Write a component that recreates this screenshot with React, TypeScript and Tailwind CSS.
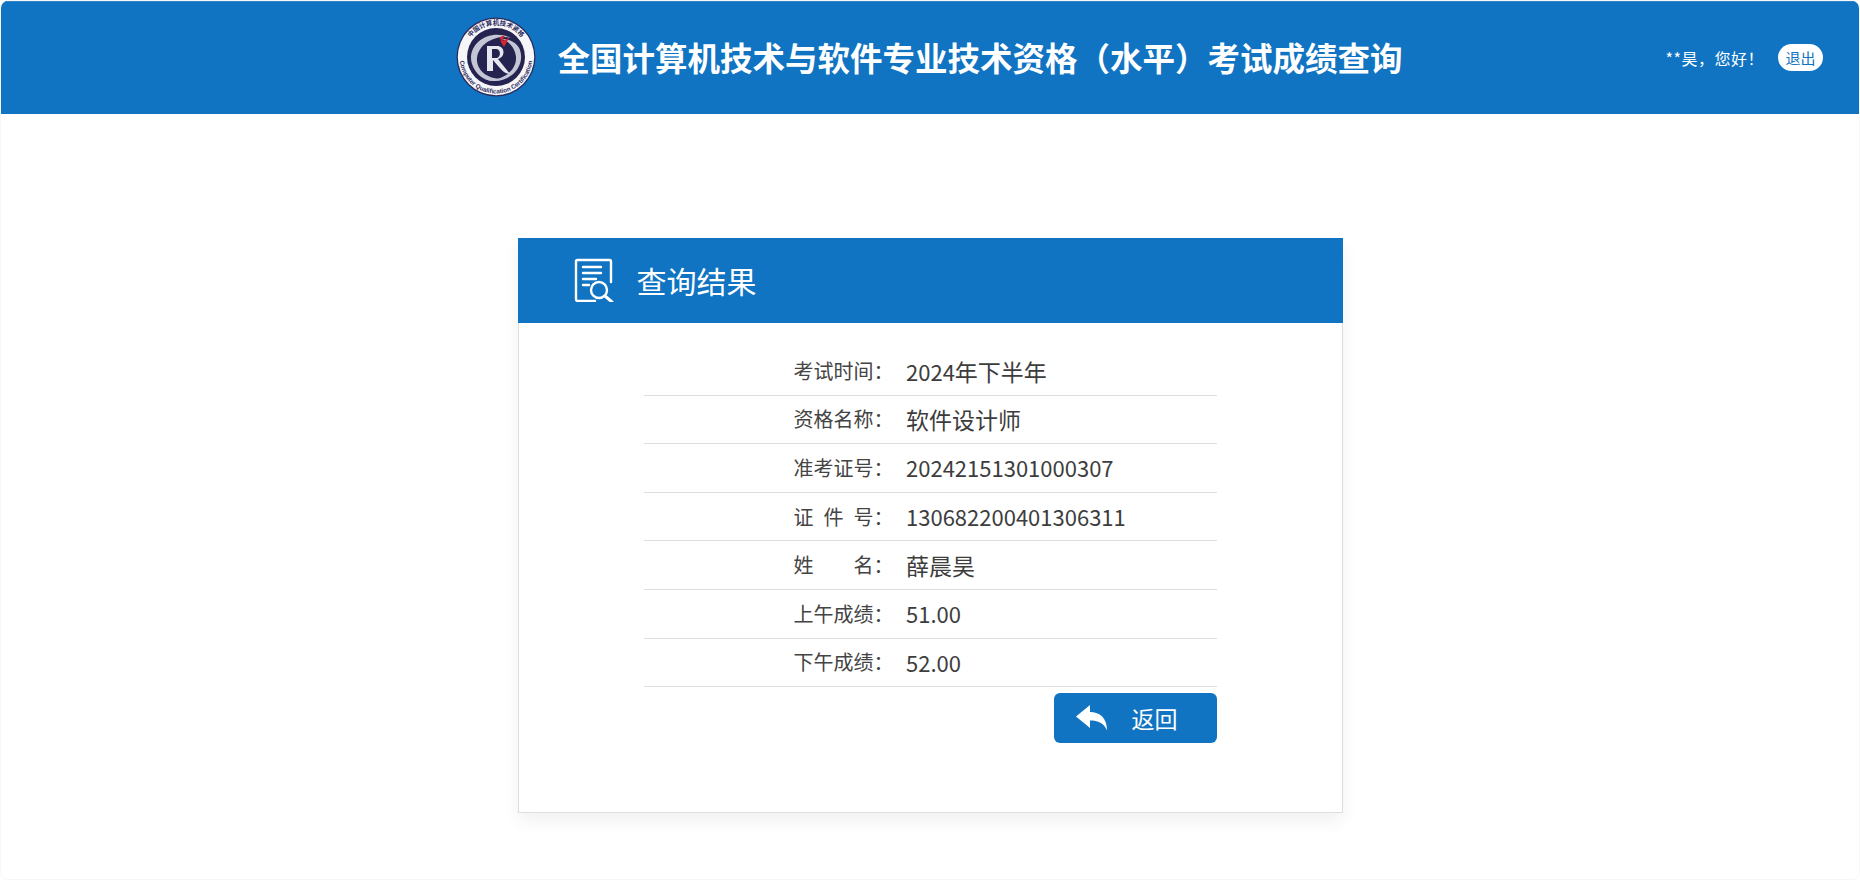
import type { ReactNode } from "react";

const cjk = (text: string) => <span className="text-[23px]">{text}</span>;

const rows: { label: string; value: ReactNode }[] = [
  { label: "考试时间", value: <>2024{cjk("年下半年")}</> },
  { label: "资格名称", value: cjk("软件设计师") },
  { label: "准考证号", value: "20242151301000307" },
  { label: "证\u2002件\u2002号", value: "130682200401306311" },
  { label: "姓　　名", value: cjk("薛晨昊") },
  { label: "上午成绩", value: "51.00" },
  { label: "下午成绩", value: "52.00" },
];

function Logo() {
  return (
    <svg width="80" height="80" viewBox="0 0 80 80" className="shrink-0">
      <circle cx="40" cy="40" r="39.5" fill="#2a2a5c" />
      <circle cx="40" cy="40" r="38.2" fill="#f6f6f9" />
      <circle cx="40" cy="40" r="29" fill="#25234f" />
      {/* swirl */}
      <path d="M16 47C10 28 32 10 56 21C42 17 23 25 21 41C20 52 30 62 46 62C34 68 20 60 16 47Z" fill="#c4c6d6" />
      <path d="M64 33C70 50 52 70 28 62C44 65 61 55 60 40C59 30 52 24 46 22C55 22 62 27 64 33Z" fill="#c4c6d6" />
      {/* R mark */}
      <path d="M31 29H41C49 29 50 40 42 42L54 57C49 57 46 54 37 43V54H31V30Z" fill="#e6e7ef" />
      <path d="M36 32V41H41C45 40 45 32 40 32Z" fill="#25234f" />
      <path d="M44 20L49 18L46 24L53 21L48 30L45 25Z" fill="#d8242c" />
      <defs>
        <path id="logoTop" d="M8 40A32 32 0 0 1 72 40" />
        <path id="logoBottom" d="M3.5 40A36.5 36.5 0 0 0 76.5 40" />
      </defs>
      <text fontSize="6.5" fontWeight="700" fill="#2a2a5c" fontFamily="'Noto Sans CJK SC', sans-serif">
        <textPath href="#logoTop" startOffset="50%" textAnchor="middle">中国计算机技术资格</textPath>
      </text>
      <text fontSize="6.2" fontWeight="700" fill="#2a2a5c" fontFamily="'Liberation Sans', sans-serif">
        <textPath href="#logoBottom" startOffset="50%" textAnchor="middle">Computer Qualification Certification</textPath>
      </text>
    </svg>
  );
}

function ResultIcon() {
  return (
    <svg width="42" height="44" viewBox="0 0 42 44" fill="none" stroke="white" strokeWidth="2.4" className="shrink-0">
      <path d="M21 43H3.5Q2 43 2 41V3.5Q2 2 3.5 2H35.5Q37 2 37 3.5V24" strokeLinecap="round" />
      <path d="M9 9H27M9 15H27M9 21H22M9 27H15" strokeLinecap="round" />
      <circle cx="25" cy="32" r="8" />
      <path d="M31 38L38 44" strokeWidth="3" strokeLinecap="round" />
    </svg>
  );
}

function ReplyIcon() {
  return (
    <svg width="32" height="26" viewBox="0 0 32 26" fill="white" className="shrink-0">
      <path d="M14 0V7C24 7 31 13 31 25.5C28 18 22 15.5 14 15.5V23L0 11.5Z" />
    </svg>
  );
}

export default function App() {
  return (
    <div className="h-[880px] bg-white font-['Noto_Sans_CJK_SC',sans-serif]">
      <div className="h-full rounded-lg border border-[#f7f7f7] overflow-hidden">
        {/* Header */}
        <div className="relative h-[114px] -mx-px -mt-px pb-[2px] bg-[#1074c2] border-t-2 border-[#2d84c8] flex items-center justify-center">
          <div className="flex items-center gap-[21px] -ml-[1px]">
            <Logo />
            <h1 className="text-[32.5px] font-bold text-white leading-none">全国计算机技术与软件专业技术资格（水平）考试成绩查询</h1>
          </div>
          <div className="absolute right-[37px] top-[42px] flex items-center gap-[14px] text-white">
            <span className="text-[16px] tracking-[0.5px]">**昊，您好！</span>
            <button className="w-[45px] h-[27px] rounded-full bg-white text-[#1074c2] text-[15px] leading-none">退出</button>
          </div>
        </div>

        {/* Result card */}
        <div className="w-[825px] h-[575px] mx-auto mt-[124px] bg-white border border-[#dedede] shadow-[0_8px_16px_rgba(0,0,0,0.06)]">
          <div className="h-[85px] -mx-px -mt-px pb-[2px] bg-[#1074c2] flex items-center pl-[56px] gap-[21px]">
            <ResultIcon />
            <h2 className="text-[30px] leading-none text-white">查询结果</h2>
          </div>
          <div className="w-[573px] ml-[125px] mt-[24px]">
            {rows.map((row) => (
              <div key={row.label} className="h-[48.6px] flex items-center border-b border-[#dedede]">
                <span className="w-[262.5px] pl-[150px] text-[20px] text-[#444] whitespace-pre shrink-0">
                  {row.label}：
                </span>
                <span className="text-[22px] text-[#3d3d3d]">{row.value}</span>
              </div>
            ))}
            <div className="flex justify-end mt-[6px]">
              <button className="w-[163px] h-[50px] rounded-md bg-[#1074c2] text-white flex items-center pl-[22px]">
                <ReplyIcon />
                <span className="text-[23px] leading-none ml-[24px]">返回</span>
              </button>
            </div>
          </div>
        </div>
      </div>
    </div>
  );
}
